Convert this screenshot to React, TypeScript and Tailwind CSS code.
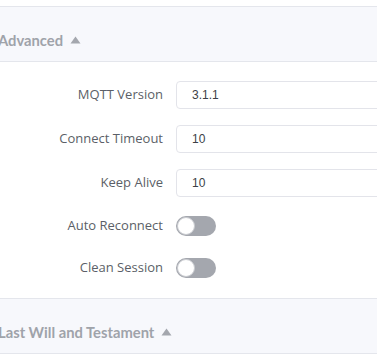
import { useState } from "react";

function Section({ title }: { title: string }) {
  return (
    <div className="-ml-[2px] border-y border-[#e4e6ec] bg-[#f7f8fc] pt-[23px] pb-[11px]">
      <div className="flex h-[20px] items-center gap-[7px] font-['Lato',sans-serif] text-[14.75px] font-bold text-[#9fa3aa]">
        <span>{title}</span>
        <svg width="11" height="8" viewBox="0 0 11 8" className="mt-[-1px]">
          <path d="M5.5 0.5 L10.5 7.5 L0.5 7.5 Z" fill="#a4a7ae" />
        </svg>
      </div>
    </div>
  );
}

function Row({ label, tall = true, children }: { label: string; tall?: boolean; children: React.ReactNode }) {
  return (
    <div className={`flex items-center ${tall ? "h-[28px]" : "h-[26px]"}`}>
      <div className="w-[163px] shrink-0 text-right text-[13px] text-[#5b5f67]">{label}</div>
      <div className="ml-[13px] flex-1">{children}</div>
    </div>
  );
}

function Field({ value }: { value: string }) {
  return (
    <div className="flex h-[28px] w-[260px] items-center rounded-[4px] border border-[#e3e4ea] bg-white pl-[15px] font-['Liberation_Sans',Arial,sans-serif] text-[12px] text-[#3c3f46]">
      {value}
    </div>
  );
}

function Toggle() {
  const [on, setOn] = useState(false);
  return (
    <button
      type="button"
      onClick={() => setOn(!on)}
      className={`relative block h-[20px] w-[40px] rounded-full ${on ? "bg-[#3b82f6]" : "bg-[#a4a7ae]"}`}
    >
      <span
        className={`absolute top-[1px] h-[18px] w-[18px] rounded-full border border-[#c9cbd0] bg-white ${on ? "left-[21px]" : "left-[1px]"}`}
      />
    </button>
  );
}

export default function App() {
  return (
    <div className="h-[355px] w-[377px] overflow-hidden bg-white pt-[6px] font-['Open_Sans','Noto_Sans',sans-serif]">
      <Section title="Advanced" />
      <div className="flex flex-col gap-[16px] pt-[19px] pb-[17px]">
        <Row label="MQTT Version">
          <Field value="3.1.1" />
        </Row>
        <Row label="Connect Timeout">
          <Field value="10" />
        </Row>
        <Row label="Keep Alive">
          <Field value="10" />
        </Row>
        <Row label="Auto Reconnect" tall={false}>
          <Toggle />
        </Row>
        <Row label="Clean Session" tall={false}>
          <Toggle />
        </Row>
      </div>
      <Section title="Last Will and Testament" />
    </div>
  );
}
